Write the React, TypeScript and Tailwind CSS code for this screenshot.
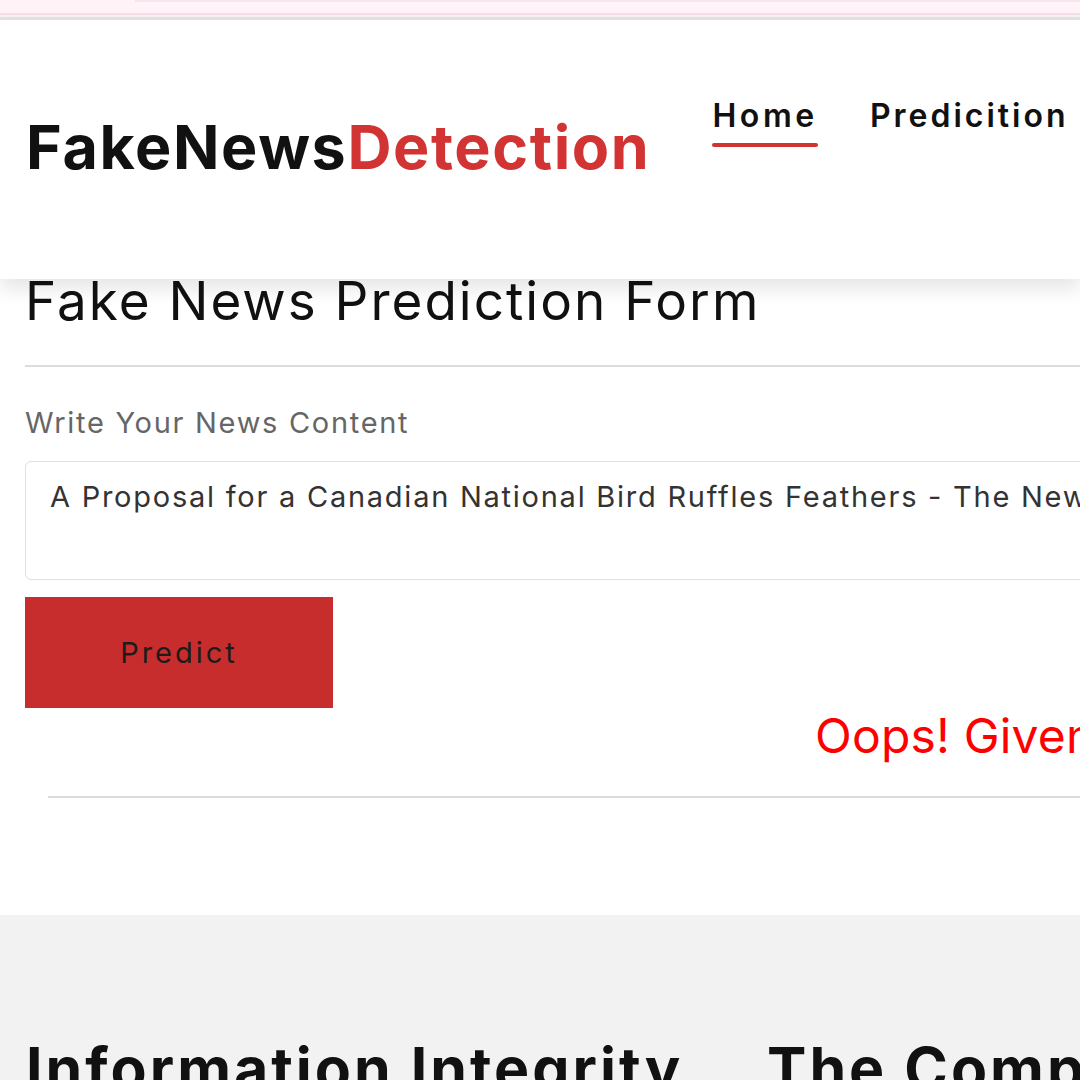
const font = "font-['Inter','Liberation_Sans',sans-serif]";

function TopStrip() {
  return (
    <div className="flex flex-col">
      <div className="h-[13px] bg-[#fff3f8] flex">
        <div className="w-[135px]" />
        <div className="flex-1 h-[2px] bg-[#f3e6ee]" />
      </div>
      <div className="h-[2px] bg-[#f4dde8]" />
      <div className="h-[2px] bg-[#f8f0f4]" />
      <div className="h-[3px] bg-[#e2e2e2]" />
    </div>
  );
}

function Header() {
  return (
    <header className="relative z-10 h-[259px] bg-white shadow-[0_10px_18px_rgba(0,0,0,0.10)] flex items-start">
      <div className="pl-[26px] pt-[97px]">
        <div className="text-[61px] font-bold leading-none tracking-[1.6px] text-[#111]">
          FakeNews<span className="text-[#d23333]">Detection</span>
        </div>
      </div>
      <nav className="flex gap-[52px] pl-[62px] pt-[80px]">
        <div className="flex flex-col">
          <span className="text-[32px] font-semibold leading-none tracking-[3.6px] text-[#111]">Home</span>
          <span className="mt-[11px] h-[4px] rounded-full bg-[#d23333]" />
        </div>
        <span className="text-[32px] font-semibold leading-none tracking-[3px] text-[#111]">Predicition</span>
      </nav>
    </header>
  );
}

function PredictionForm() {
  return (
    <section className="bg-white pb-[117px]">
      <div className="w-[2200px] pl-[25px]">
        <h1 className="-mt-[4px] text-[53px] font-normal leading-none tracking-[2px] text-[#111]">
          Fake News Prediction Form
        </h1>
        <div className="mt-[37px] h-[2px] bg-[#dcdcdc]" />
        <label className="block mt-[41px] text-[29px] leading-none tracking-[1.7px] text-[#666]">
          Write Your News Content
        </label>
        <textarea
          readOnly
          rows={2}
          value="A Proposal for a Canadian National Bird Ruffles Feathers - The New York Times"
          className={`mt-[24px] block w-full h-[119px] resize-none rounded-[6px] border border-[#dde1e5] px-[24px] pt-[16px] text-[29px] leading-[1.3] tracking-[1.75px] text-[#333] outline-none ${font}`}
        />
        <button className="mt-[17px] w-[308px] h-[111px] bg-[#c82d2d] text-[29px] tracking-[3px] text-[#1c1c1c]">
          Predict
        </button>
        <p className="-mt-[1px] pl-[790px] text-[48px] leading-[1.2] tracking-[0.2px] text-[#ff0000]">
          Oops! Given News is Fake
        </p>
        <div className="ml-[23px] mt-[31px] h-[2px] bg-[#dadada]" />
      </div>
    </section>
  );
}

function InfoSection() {
  return (
    <section className="bg-[#f2f2f2] pt-[124px] pb-[60px]">
      <div className="flex gap-[87px] pl-[26px] w-[2200px]">
        <h2 className="w-[654px] whitespace-nowrap text-[59px] font-bold leading-none tracking-[3px] text-[#111]">
          Information Integrity
        </h2>
        <h2 className="whitespace-nowrap text-[59px] font-bold leading-none tracking-[3px] text-[#111]">
          The Compromise of Truth
        </h2>
      </div>
    </section>
  );
}

export default function App() {
  return (
    <div className={`w-[1080px] h-[1080px] overflow-hidden bg-white ${font}`}>
      <TopStrip />
      <Header />
      <PredictionForm />
      <InfoSection />
    </div>
  );
}
